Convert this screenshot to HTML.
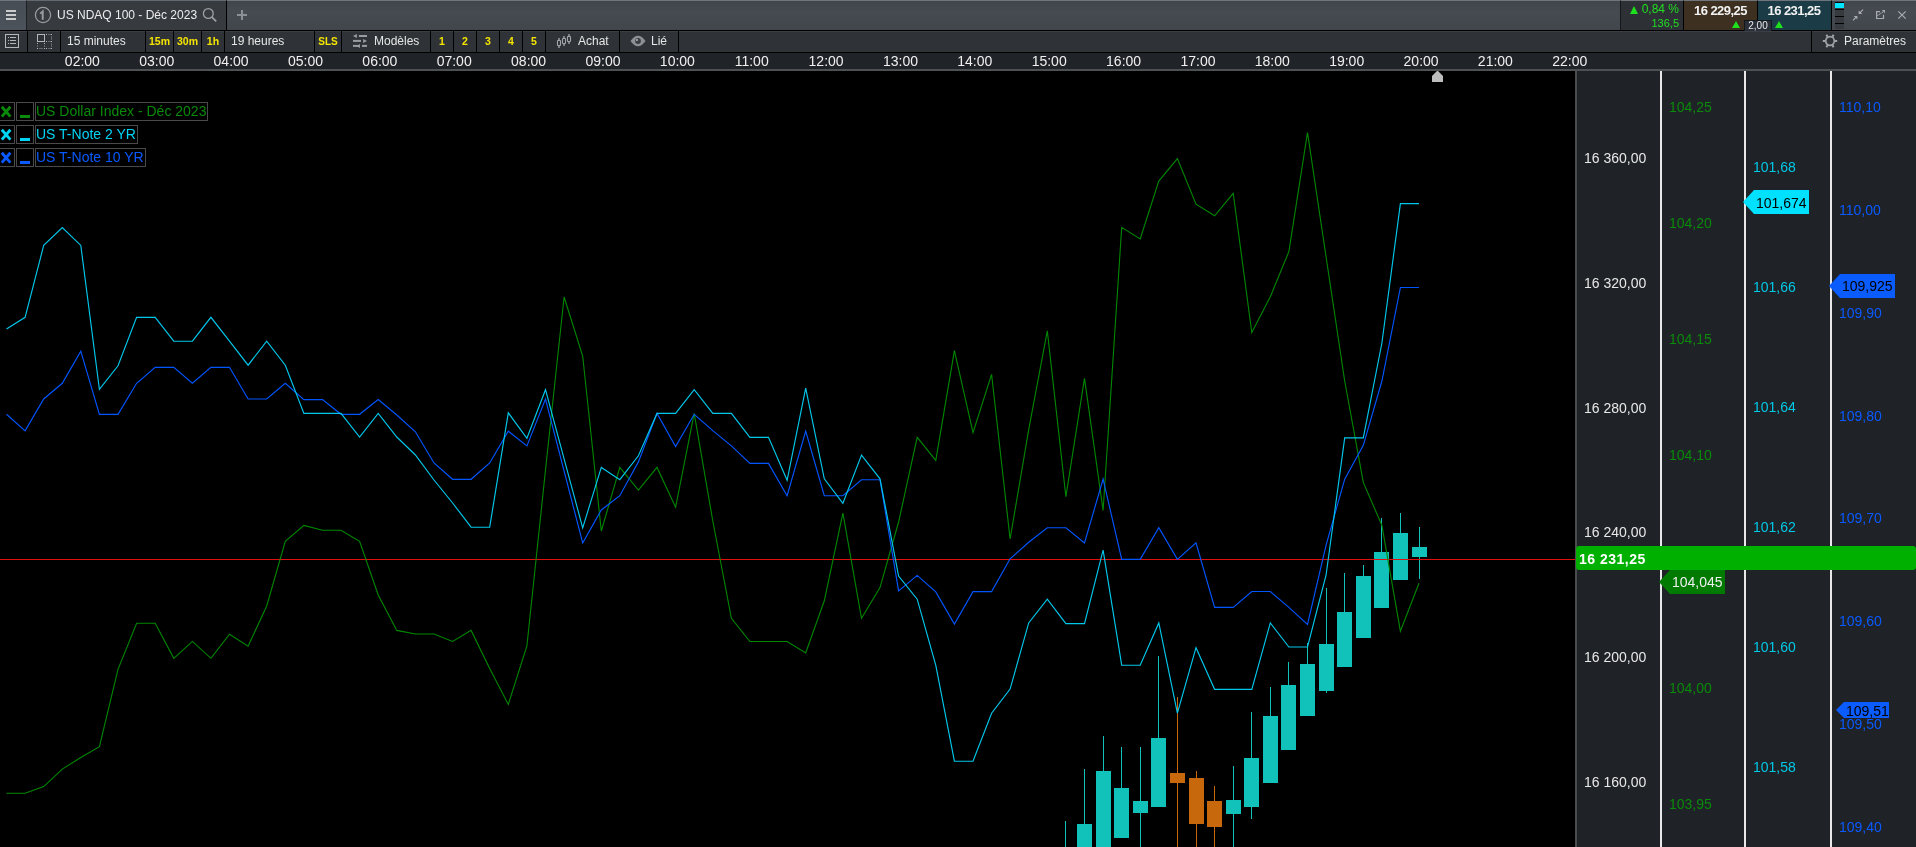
<!DOCTYPE html>
<html><head><meta charset="utf-8">
<style>
*{margin:0;padding:0;box-sizing:border-box}
html,body{width:1916px;height:847px;overflow:hidden;background:#000;font-family:"Liberation Sans",sans-serif}
.abs{position:absolute}
#topbar{position:absolute;left:0;top:0;width:1916px;height:31px;background:linear-gradient(#41464d,#464b52 40%,#41464c);border-top:1px solid #6f757b;border-bottom:1px solid #000}
#ham{position:absolute;left:0;top:0;width:27px;height:30px;background:linear-gradient(#474d54,#4d535a);border-top:1px solid #70767c;border-right:1px solid #1e2124}
#ham i{position:absolute;left:6px;width:10px;height:2px;background:#c9cbcd}
#tab{position:absolute;left:27px;top:0;width:200px;height:30px;background:#373b40;border-top:1px solid #626970;border-right:1px solid #000}
#tab .t{position:absolute;left:30px;top:7px;font-size:12px;color:#ececec;white-space:nowrap}
#plus{position:absolute;left:237px;top:10px;width:10px;height:10px}
#plus:before{content:"";position:absolute;left:4px;top:0;width:2px;height:10px;background:#8b9095}
#plus:after{content:"";position:absolute;left:0;top:4px;width:10px;height:2px;background:#8b9095}
#chg{position:absolute;left:1620px;top:0;width:64px;height:30px;background:#2d3136;border-left:1px solid #16181a;border-top:1px solid #6f757b}
#bid{position:absolute;left:1683px;top:0;width:75px;height:30px;background:#3e3020;border-left:1px solid #000;border-top:1px solid #6f757b}
#ask{position:absolute;left:1757px;top:0;width:75px;height:30px;background:#1b3c46;border-left:1px solid #000;border-right:1px solid #000;border-top:1px solid #6f757b}
.bigp{position:absolute;top:2px;font-size:13px;font-weight:bold;color:#f2f2f2;white-space:nowrap;letter-spacing:-0.55px}
.tri{position:absolute;width:0;height:0;border-left:4px solid transparent;border-right:4px solid transparent;border-bottom:8px solid #1ee01e}
.tri2{position:absolute;width:0;height:0;border-left:4px solid transparent;border-right:4px solid transparent;border-bottom:7px solid #1ee01e}
#spread{position:absolute;left:1744px;top:20px;width:28px;height:11px;background:#29303a;border:1px solid #15181b;border-bottom:none;border-radius:1px 1px 0 0;font-size:10px;color:#e6e6e6;text-align:center;line-height:9px}
#lvl{position:absolute;left:1835px;top:2px;width:9px;height:27px;background:#373b40}
#toolbar{position:absolute;left:0;top:31px;width:1916px;height:22px;background:#000}
.cell{position:absolute;top:0;height:21px;background:#2f3337;border-top:1px solid #3b3f44;color:#e6e6e6;font-size:12px;line-height:19px;white-space:nowrap}
.y{color:#f5e400;font-weight:bold;font-size:10.5px;text-align:center}
#taxis{position:absolute;left:0;top:53px;width:1916px;height:16px;background:#202327}
#taxisline{position:absolute;left:0;top:69px;width:1916px;height:2px;background:#4e5154}
.tl{position:absolute;top:0px;width:60px;text-align:center;font-size:14px;color:#f0f0f0;line-height:16px}
#panel{position:absolute;left:1575px;top:71px;width:341px;height:776px;background:#1f2226;border-left:2px solid #4b4c4e}
.vl{position:absolute;top:71px;width:2px;height:776px;background:#e8e8e8}
.pl{position:absolute;font-size:14px;line-height:18px;white-space:nowrap}
.leg{position:absolute;height:19px;border:1px solid #4a4a4a;font-size:14px;line-height:17px;white-space:nowrap}
.tag{position:absolute;font-size:14px;line-height:24px;color:#000;white-space:nowrap}
</style></head><body><div id="root" style="position:absolute;left:0;top:0;width:1916px;height:847px;will-change:transform">
<div id="topbar"></div>
<div id="ham"><i style="top:9px"></i><i style="top:13px"></i><i style="top:17px"></i></div>
<div id="tab">
 <svg class="abs" style="left:7px;top:5px" width="18" height="18" viewBox="0 0 18 18"><circle cx="9" cy="9" r="7.6" fill="none" stroke="#9a9ea2" stroke-width="1.2"/><path d="M6.2,7.6 L8.7,5.4 L8.7,13.8" fill="none" stroke="#9a9ea2" stroke-width="1.9"/></svg>
 <div class="t">US NDAQ 100 - Déc 2023</div>
 <svg class="abs" style="left:175px;top:5px" width="18" height="18" viewBox="0 0 18 18"><circle cx="6.3" cy="7.5" r="4.9" fill="none" stroke="#9da1a5" stroke-width="1.3"/><line x1="9.9" y1="11.1" x2="14.2" y2="15.3" stroke="#9da1a5" stroke-width="1.7"/></svg>
</div>
<div id="plus"></div>
<div id="chg">
 <div class="tri" style="left:9px;top:5px"></div>
 <div class="abs" style="right:5px;top:2px;font-size:12px;color:#22dd22;line-height:13px">0,84 %</div>
 <div class="abs" style="right:5px;top:16px;font-size:11px;color:#22dd22;line-height:12px">136,5</div>
</div>
<div id="bid"><div class="bigp" style="left:10px">16 229,25</div><div class="tri2" style="left:48px;top:20px"></div></div>
<div id="ask"><div class="bigp" style="left:9.5px">16 231,25</div><div class="tri2" style="left:17px;top:20px"></div></div>
<div id="spread">2,00</div>
<div id="lvl">
 <div class="abs" style="left:0;top:0;width:9px;height:1px;background:#000"></div>
 <div class="abs" style="left:0;top:1px;width:9px;height:5px;background:#00e5ff"></div>
 <div class="abs" style="left:0;top:7px;width:9px;height:1px;background:#000"></div>
 <div class="abs" style="left:0;top:14px;width:9px;height:1px;background:#000"></div>
 <div class="abs" style="left:0;top:21px;width:9px;height:1px;background:#000"></div>
</div>
<svg class="abs" style="left:1850px;top:7px" width="60" height="16" viewBox="0 0 60 16">
 <g fill="#a9acaf"><path d="M8.6,7.1 L8.6,3.4 L12.3,7.1 Z"/><path d="M7.4,8.9 L3.7,8.9 L7.4,12.6 Z"/><path d="M31.8,3 L35,3 L35,6.2 Z"/></g>
 <g stroke="#a9acaf" stroke-width="1.2" fill="none">
  <path d="M9.8,5.9 L13,2.7 M6.2,10.1 L3,13.3"/>
  <path d="M30,4.6 L26.6,4.6 L26.6,11.5 L33.5,11.5 L33.5,7.8"/><path d="M27.4,8.6 L33.6,4.4" stroke-dasharray="1.2,0.6"/>
  <path d="M48.3,4.3 L55.7,11.7 M55.7,4.3 L48.3,11.7"/>
 </g>
</svg>

<div id="toolbar">
 <div class="cell" style="left:0;width:27px">
  <svg class="abs" style="left:5px;top:2px" width="15" height="15" viewBox="0 0 15 15" shape-rendering="crispEdges"><rect x="0.5" y="0.5" width="13" height="13" fill="none" stroke="#b4b6b8" stroke-width="1.2"/><g fill="#b4b6b8"><rect x="3" y="3" width="1" height="1"/><rect x="3" y="6" width="1" height="1"/><rect x="3" y="9" width="1" height="1"/><rect x="5" y="3" width="6" height="1"/><rect x="5" y="6" width="6" height="1"/><rect x="5" y="9" width="6" height="1"/></g></svg>
 </div>
 <div class="cell" style="left:28px;width:32px">
  <svg class="abs" style="left:9px;top:2px" width="16" height="16" viewBox="0 0 16 16" shape-rendering="crispEdges"><rect x="0.5" y="0.5" width="7" height="7" fill="none" stroke="#b4b6b8" stroke-width="1"/><rect x="9" y="0" width="1" height="1" fill="#b4b6b8"/><rect x="11" y="0" width="3" height="1" fill="#62666b"/><rect x="14" y="0" width="1" height="1" fill="#b4b6b8"/><rect x="9" y="7" width="1" height="1" fill="#b4b6b8"/><rect x="11" y="7" width="3" height="1" fill="#62666b"/><rect x="14" y="7" width="1" height="1" fill="#b4b6b8"/><rect x="0" y="14" width="1" height="1" fill="#b4b6b8"/><rect x="2" y="14" width="4" height="1" fill="#62666b"/><rect x="7" y="14" width="1" height="1" fill="#b4b6b8"/><rect x="9" y="14" width="1" height="1" fill="#b4b6b8"/><rect x="11" y="14" width="3" height="1" fill="#62666b"/><rect x="14" y="14" width="1" height="1" fill="#b4b6b8"/><rect x="14" y="2" width="1" height="4" fill="#62666b"/><rect x="14" y="9" width="1" height="4" fill="#62666b"/><rect x="7" y="9" width="1" height="1" fill="#b4b6b8"/><rect x="7" y="11" width="1" height="2" fill="#62666b"/><rect x="0" y="9" width="1" height="1" fill="#b4b6b8"/><rect x="0" y="11" width="1" height="2" fill="#62666b"/></svg>
 </div>
 <div class="cell" style="left:61px;width:84px;padding-left:6px">15 minutes</div>
 <div class="cell y" style="left:146px;width:27px">15m</div>
 <div class="cell y" style="left:174px;width:27px">30m</div>
 <div class="cell y" style="left:202px;width:22px">1h</div>
 <div class="cell" style="left:225px;width:89px;padding-left:6px">19 heures</div>
 <div class="cell y" style="left:315px;width:26px;font-size:10px">SLS</div>
 <div class="cell" style="left:342px;width:88px">
  <svg class="abs" style="left:11px;top:2px" width="15" height="15" viewBox="0 0 15 15"><g fill="#9a9da0"><path d="M0,1.9 L3.9,0 L3.9,4 Z"/><rect x="5.9" y="1" width="8.1" height="2"/><rect x="0" y="5.9" width="8" height="2"/><path d="M10.1,4.9 L10.1,9 L14,6.9 Z"/><rect x="0" y="10.9" width="7" height="2"/><path d="M3.5,11.9 L7,9.9 L7,14.1 Z"/><rect x="9" y="10.9" width="5" height="2"/></g></svg>
  <span class="abs" style="left:32px;top:0">Modèles</span>
 </div>
 <div class="cell y" style="left:431px;width:22px">1</div>
 <div class="cell y" style="left:454px;width:22px">2</div>
 <div class="cell y" style="left:477px;width:22px">3</div>
 <div class="cell y" style="left:500px;width:22px">4</div>
 <div class="cell y" style="left:523px;width:22px">5</div>
 <div class="cell" style="left:546px;width:73px">
  <svg class="abs" style="left:10px;top:2px" width="16" height="16" viewBox="0 0 16 16"><g fill="#7d8084"><rect x="2" y="4" width="2" height="2"/><rect x="2" y="12" width="2" height="2"/><rect x="7" y="2" width="2" height="2"/><rect x="7" y="10" width="2" height="2"/><rect x="12" y="0" width="2" height="2"/><rect x="12" y="8" width="2" height="2"/></g><g fill="none" stroke="#a3a6a9" stroke-width="1.1"><rect x="1.5" y="6.5" width="3" height="5" rx="0.6"/><rect x="6.5" y="4.5" width="3" height="5" rx="0.6"/><rect x="11.5" y="2.5" width="3" height="5" rx="0.6"/></g></svg>
  <span class="abs" style="left:32px;top:0">Achat</span>
 </div>
 <div class="cell" style="left:620px;width:58px">
  <svg class="abs" style="left:10px;top:3px" width="16" height="12" viewBox="0 0 16 12"><path d="M0.5,6 Q8,-4.5 15.5,6 Q8,16.5 0.5,6 Z" fill="#8e9194"/><circle cx="8" cy="6" r="2.9" fill="#3a3d41"/><circle cx="6.9" cy="4.9" r="1.2" fill="#9a9da0"/></svg>
  <span class="abs" style="left:31px;top:0">Lié</span>
 </div>
 <div class="cell" style="left:679px;width:1132px"></div>
 <div class="cell" style="left:1812px;width:104px">
  <svg class="abs" style="left:10px;top:1px" width="16" height="16" viewBox="0 0 16 16"><circle cx="8" cy="8" r="4.3" fill="none" stroke="#a0a3a6" stroke-width="1.7"/><path d="M12.60,8.00 L15.20,8.00 M10.30,11.98 L11.60,14.24 M5.70,11.98 L4.40,14.24 M3.40,8.00 L0.80,8.00 M5.70,4.02 L4.40,1.76 M10.30,4.02 L11.60,1.76" stroke="#a0a3a6" stroke-width="2"/></svg>
  <span class="abs" style="left:32px;top:0">Paramètres</span>
 </div>
</div>

<div id="taxis">
<div class="tl" style="left:52.4px">02:00</div>
<div class="tl" style="left:126.8px">03:00</div>
<div class="tl" style="left:201.1px">04:00</div>
<div class="tl" style="left:275.5px">05:00</div>
<div class="tl" style="left:349.9px">06:00</div>
<div class="tl" style="left:424.2px">07:00</div>
<div class="tl" style="left:498.6px">08:00</div>
<div class="tl" style="left:573.0px">09:00</div>
<div class="tl" style="left:647.4px">10:00</div>
<div class="tl" style="left:721.7px">11:00</div>
<div class="tl" style="left:796.1px">12:00</div>
<div class="tl" style="left:870.5px">13:00</div>
<div class="tl" style="left:944.8px">14:00</div>
<div class="tl" style="left:1019.2px">15:00</div>
<div class="tl" style="left:1093.6px">16:00</div>
<div class="tl" style="left:1168.0px">17:00</div>
<div class="tl" style="left:1242.3px">18:00</div>
<div class="tl" style="left:1316.7px">19:00</div>
<div class="tl" style="left:1391.1px">20:00</div>
<div class="tl" style="left:1465.4px">21:00</div>
<div class="tl" style="left:1539.8px">22:00</div>
</div>
<div id="taxisline"></div>

<div class="abs" style="left:0;top:71px;width:1575px;height:776px;overflow:hidden">
<div class="abs" style="left:0;top:-71px;width:1575px;height:847px">
<svg width="1575" height="847" viewBox="0 0 1575 847" style="position:absolute;left:0;top:0">
<rect x="1065" y="821" width="1" height="29" fill="#10c2b9"/>
<rect x="1084" y="769" width="1" height="81" fill="#10c2b9"/>
<rect x="1077" y="824" width="15" height="26" fill="#10c2b9"/>
<rect x="1103" y="736" width="1" height="114" fill="#10c2b9"/>
<rect x="1096" y="771" width="15" height="79" fill="#10c2b9"/>
<rect x="1121" y="747" width="1" height="91" fill="#10c2b9"/>
<rect x="1114" y="788" width="15" height="50" fill="#10c2b9"/>
<rect x="1140" y="747" width="1" height="103" fill="#10c2b9"/>
<rect x="1133" y="801" width="15" height="12" fill="#10c2b9"/>
<rect x="1158" y="656" width="1" height="151" fill="#10c2b9"/>
<rect x="1151" y="738" width="15" height="69" fill="#10c2b9"/>
<rect x="1177" y="697" width="1" height="153" fill="#c8680c"/>
<rect x="1170" y="773" width="15" height="10" fill="#c8680c"/>
<rect x="1196" y="771" width="1" height="79" fill="#c8680c"/>
<rect x="1189" y="778" width="15" height="46" fill="#c8680c"/>
<rect x="1214" y="786" width="1" height="64" fill="#c8680c"/>
<rect x="1207" y="801" width="15" height="26" fill="#c8680c"/>
<rect x="1233" y="766" width="1" height="84" fill="#10c2b9"/>
<rect x="1226" y="800" width="15" height="14" fill="#10c2b9"/>
<rect x="1251" y="712" width="1" height="107" fill="#10c2b9"/>
<rect x="1244" y="758" width="15" height="49" fill="#10c2b9"/>
<rect x="1270" y="687" width="1" height="96" fill="#10c2b9"/>
<rect x="1263" y="716" width="15" height="67" fill="#10c2b9"/>
<rect x="1288" y="662" width="1" height="88" fill="#10c2b9"/>
<rect x="1281" y="685" width="15" height="65" fill="#10c2b9"/>
<rect x="1307" y="643" width="1" height="73" fill="#10c2b9"/>
<rect x="1300" y="664" width="15" height="52" fill="#10c2b9"/>
<rect x="1326" y="588" width="1" height="105" fill="#10c2b9"/>
<rect x="1319" y="644" width="15" height="47" fill="#10c2b9"/>
<rect x="1344" y="573" width="1" height="94" fill="#10c2b9"/>
<rect x="1337" y="612" width="15" height="55" fill="#10c2b9"/>
<rect x="1363" y="565" width="1" height="73" fill="#10c2b9"/>
<rect x="1356" y="576" width="15" height="62" fill="#10c2b9"/>
<rect x="1381" y="518" width="1" height="90" fill="#10c2b9"/>
<rect x="1374" y="552" width="15" height="56" fill="#10c2b9"/>
<rect x="1400" y="513" width="1" height="67" fill="#10c2b9"/>
<rect x="1393" y="533" width="15" height="47" fill="#10c2b9"/>
<rect x="1419" y="527" width="1" height="52" fill="#10c2b9"/>
<rect x="1412" y="547" width="15" height="10" fill="#10c2b9"/>
<line x1="0" y1="559.5" x2="1575" y2="559.5" stroke="#e01010" stroke-width="1"/>
<polyline fill="none" stroke="#008800" stroke-width="1.1" points="6.5,793.3 25.1,793.3 43.7,786.6 62.3,769.1 80.8,757.5 99.4,746.7 118.0,669.4 136.6,623.3 155.2,623.3 173.8,658.3 192.4,641.4 210.9,658.3 229.5,634.2 248.1,646.2 266.7,606.0 285.3,541.3 303.9,525.4 322.5,530.3 341.0,530.3 359.6,541.3 378.2,595.0 396.8,630.4 415.4,634.0 434.0,634.0 452.6,641.4 471.1,630.4 489.7,668.6 508.3,704.4 526.9,646.0 545.5,470.0 564.1,297.0 582.7,356.0 601.3,531.0 619.8,467.4 638.4,490.1 657.0,467.4 675.6,507.3 694.2,413.4 712.8,521.0 731.4,618.3 749.9,641.5 768.5,641.5 787.1,641.5 805.7,653.0 824.3,600.8 842.9,513.2 861.5,618.3 880.0,587.6 898.6,522.0 917.2,437.3 935.8,460.4 954.4,350.7 973.0,432.7 991.6,374.4 1010.1,539.0 1028.7,429.7 1047.3,330.8 1065.9,496.6 1084.5,378.3 1103.1,510.5 1121.7,227.4 1140.2,238.9 1158.8,181.1 1177.4,158.6 1196.0,204.2 1214.6,215.8 1233.2,193.3 1251.8,332.5 1270.3,296.8 1288.9,251.5 1307.5,132.5 1326.1,257.0 1344.7,381.0 1363.3,482.4 1381.9,525.4 1400.4,631.2 1419.0,583.2"/>
<polyline fill="none" stroke="#0055ff" stroke-width="1.15" points="6.5,414.3 25.1,430.9 43.7,399.0 62.3,383.3 80.8,351.1 99.4,414.3 118.0,414.3 136.6,383.3 155.2,367.3 173.8,367.3 192.4,383.3 210.9,367.3 229.5,367.3 248.1,399.0 266.7,399.0 285.3,383.3 303.9,399.6 322.5,399.6 341.0,414.3 359.6,414.3 378.2,399.6 396.8,415.0 415.4,431.8 434.0,463.0 452.6,479.3 471.1,479.3 489.7,463.0 508.3,431.2 526.9,445.9 545.5,399.0 564.1,471.0 582.7,543.0 601.3,510.0 619.8,495.7 638.4,461.9 657.0,413.4 675.6,446.5 694.2,414.3 712.8,430.6 731.4,445.9 749.9,463.4 768.5,463.4 787.1,495.7 805.7,431.2 824.3,495.7 842.9,495.7 861.5,479.7 880.0,479.7 898.6,590.9 917.2,575.4 935.8,591.9 954.4,624.0 973.0,591.6 991.6,591.6 1010.1,558.8 1028.7,542.3 1047.3,527.7 1065.9,527.7 1084.5,542.9 1103.1,479.1 1121.7,559.4 1140.2,559.4 1158.8,527.7 1177.4,559.4 1196.0,542.9 1214.6,607.4 1233.2,607.4 1251.8,591.5 1270.3,591.5 1288.9,607.4 1307.5,624.5 1326.1,545.2 1344.7,479.1 1363.3,445.4 1381.9,381.0 1400.4,287.5 1419.0,287.5"/>
<polyline fill="none" stroke="#00c8ec" stroke-width="1.15" points="6.5,329.0 25.1,317.3 43.7,245.4 62.3,227.6 80.8,245.4 99.4,389.4 118.0,365.8 136.6,317.3 155.2,317.3 173.8,341.2 192.4,341.2 210.9,317.3 229.5,341.2 248.1,365.2 266.7,341.2 285.3,365.2 303.9,413.4 322.5,413.4 341.0,413.4 359.6,437.0 378.2,413.4 396.8,437.0 415.4,455.0 434.0,480.0 452.6,503.0 471.1,527.2 489.7,527.2 508.3,412.8 526.9,438.3 545.5,389.7 564.1,458.8 582.7,527.9 601.3,467.4 619.8,479.7 638.4,455.8 657.0,413.4 675.6,413.4 694.2,389.7 712.8,413.4 731.4,413.4 749.9,437.3 768.5,437.3 787.1,480.3 805.7,388.2 824.3,478.8 842.9,503.3 861.5,455.1 880.0,478.8 898.6,576.0 917.2,599.2 935.8,665.3 954.4,761.2 973.0,761.2 991.6,713.2 1010.1,689.1 1028.7,622.9 1047.3,599.1 1065.9,623.6 1084.5,623.6 1103.1,550.2 1121.7,665.2 1140.2,665.2 1158.8,622.9 1177.4,713.1 1196.0,647.7 1214.6,689.3 1233.2,689.3 1251.8,689.3 1270.3,622.9 1288.9,647.0 1307.5,647.0 1326.1,575.0 1344.7,437.8 1363.3,437.8 1381.9,343.0 1400.4,203.6 1419.0,203.6"/>
<path d="M1432,76 L1437.5,70.5 L1443,76 L1443,82 L1432,82 Z" fill="#bdbdbd"/>
</svg>
</div>
</div>

<div class="leg" style="left:-1px;top:102px;width:16px;color:#0a8a0a"><svg class="abs" style="left:0px;top:2px" width="13" height="14" viewBox="0 0 13 14"><path d="M1.8,1.8 L10.4,11.6 M10.4,1.8 L1.8,11.6" stroke="#0a8a0a" stroke-width="2.9"/></svg></div>
<div class="leg" style="left:16px;top:102px;width:18px"><div class="abs" style="left:3px;top:12px;width:10px;height:3px;background:#0a8a0a"></div></div>
<div class="leg" style="left:35px;top:102px;width:173px;color:#0a8a0a;padding-left:0px">US Dollar Index - Déc 2023</div>

<div class="leg" style="left:-1px;top:125px;width:16px"><svg class="abs" style="left:0px;top:2px" width="13" height="14" viewBox="0 0 13 14"><path d="M1.8,1.8 L10.4,11.6 M10.4,1.8 L1.8,11.6" stroke="#00d4f5" stroke-width="2.9"/></svg></div>
<div class="leg" style="left:16px;top:125px;width:18px"><div class="abs" style="left:3px;top:12px;width:10px;height:3px;background:#00d4f5"></div></div>
<div class="leg" style="left:35px;top:125px;width:103px;color:#00d4f5">US T-Note 2 YR</div>

<div class="leg" style="left:-1px;top:148px;width:16px"><svg class="abs" style="left:0px;top:2px" width="13" height="14" viewBox="0 0 13 14"><path d="M1.8,1.8 L10.4,11.6 M10.4,1.8 L1.8,11.6" stroke="#0a5aff" stroke-width="2.9"/></svg></div>
<div class="leg" style="left:16px;top:148px;width:18px"><div class="abs" style="left:3px;top:12px;width:10px;height:3px;background:#0a5aff"></div></div>
<div class="leg" style="left:35px;top:148px;width:111px;color:#0a5aff">US T-Note 10 YR</div>

<div id="panel"></div>
<div class="vl" style="left:1660px"></div>
<div class="vl" style="left:1744px"></div>
<div class="vl" style="left:1830px"></div>
<div class="pl" style="left:1584px;top:149.0px;color:#e8e8e8">16 360,00</div>
<div class="pl" style="left:1584px;top:273.5px;color:#e8e8e8">16 320,00</div>
<div class="pl" style="left:1584px;top:398.5px;color:#e8e8e8">16 280,00</div>
<div class="pl" style="left:1584px;top:523.0px;color:#e8e8e8">16 240,00</div>
<div class="pl" style="left:1584px;top:648.0px;color:#e8e8e8">16 200,00</div>
<div class="pl" style="left:1584px;top:773.0px;color:#e8e8e8">16 160,00</div>
<div class="pl" style="left:1669px;top:98.0px;color:#0a8a0a">104,25</div>
<div class="pl" style="left:1669px;top:214.0px;color:#0a8a0a">104,20</div>
<div class="pl" style="left:1669px;top:330.0px;color:#0a8a0a">104,15</div>
<div class="pl" style="left:1669px;top:446.0px;color:#0a8a0a">104,10</div>
<div class="pl" style="left:1669px;top:679.0px;color:#0a8a0a">104,00</div>
<div class="pl" style="left:1669px;top:795.0px;color:#0a8a0a">103,95</div>
<div class="pl" style="left:1753px;top:158.0px;color:#00c8e6">101,68</div>
<div class="pl" style="left:1753px;top:278.0px;color:#00c8e6">101,66</div>
<div class="pl" style="left:1753px;top:398.0px;color:#00c8e6">101,64</div>
<div class="pl" style="left:1753px;top:518.0px;color:#00c8e6">101,62</div>
<div class="pl" style="left:1753px;top:638.0px;color:#00c8e6">101,60</div>
<div class="pl" style="left:1753px;top:758.0px;color:#00c8e6">101,58</div>
<div class="pl" style="left:1839px;top:98.0px;color:#0a5aff">110,10</div>
<div class="pl" style="left:1839px;top:201.0px;color:#0a5aff">110,00</div>
<div class="pl" style="left:1839px;top:304.0px;color:#0a5aff">109,90</div>
<div class="pl" style="left:1839px;top:407.0px;color:#0a5aff">109,80</div>
<div class="pl" style="left:1839px;top:509.0px;color:#0a5aff">109,70</div>
<div class="pl" style="left:1839px;top:612.0px;color:#0a5aff">109,60</div>
<div class="pl" style="left:1839px;top:715.0px;color:#0a5aff">109,50</div>
<div class="pl" style="left:1839px;top:818.0px;color:#0a5aff">109,40</div>

<!-- current price tag -->
<div class="abs" style="left:1576px;top:546px;width:340px;height:24px;background:#00b000;border-radius:3px"></div>
<div class="abs" style="left:1579px;top:550px;font-size:14px;font-weight:bold;color:#fff;line-height:18px;letter-spacing:0.5px">16 231,25</div>
<!-- 104,045 tag -->
<svg class="abs" style="left:1659px;top:570px" width="67" height="24"><path d="M0,12 L11,0 L66,0 L66,24 L11,24 Z" fill="#007a00"/></svg>
<div class="abs" style="left:1672px;top:573px;font-size:14px;color:#f0f0f0;line-height:18px">104,045</div>
<!-- 101,674 tag -->
<svg class="abs" style="left:1743px;top:190px" width="67" height="24"><path d="M0,12 L11,0 L66,0 L66,24 L11,24 Z" fill="#00e0ff"/></svg>
<div class="abs" style="left:1756px;top:194px;font-size:14px;color:#000;line-height:18px">101,674</div>
<!-- 109,925 tag -->
<svg class="abs" style="left:1829px;top:274px" width="67" height="24"><path d="M0,12 L11,0 L66,0 L66,24 L11,24 Z" fill="#0a5cff"/></svg>
<div class="abs" style="left:1842px;top:277px;font-size:14px;color:#000;line-height:18px">109,925</div>
<!-- 109,51 tag -->
<svg class="abs" style="left:1836px;top:702px" width="53" height="16"><path d="M0,8 L8,0 L53,0 L53,16 L8,16 Z" fill="#0a5cff"/></svg>
<div class="abs" style="left:1846px;top:702px;font-size:14px;color:#000;line-height:18px">109,51</div>

</div></body></html>
